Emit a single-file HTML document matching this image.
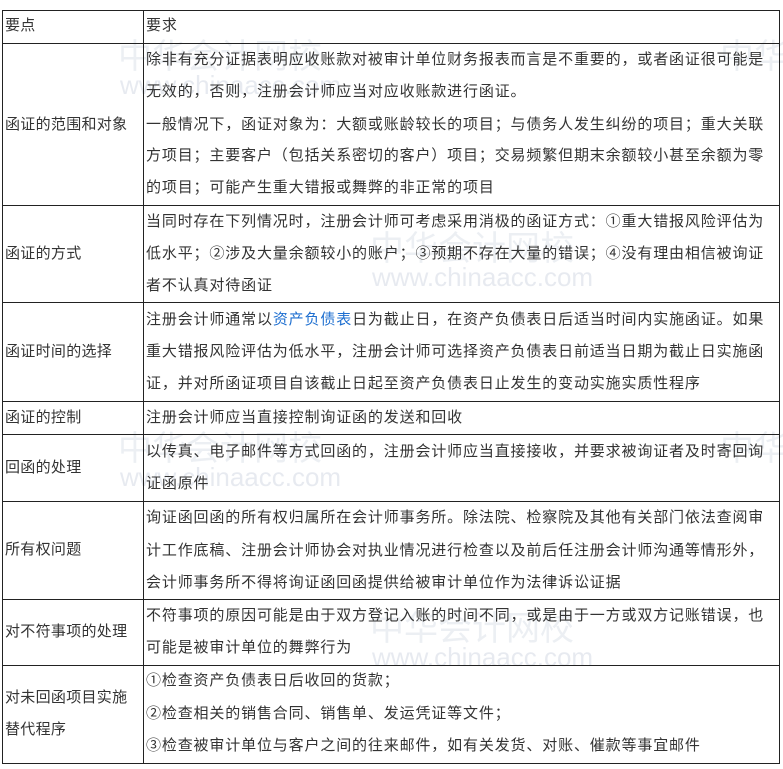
<!DOCTYPE html>
<html><head><meta charset="utf-8"><style>
body{margin:0;width:783px;height:769px;background:#fff;position:relative;overflow:hidden;font-family:"Liberation Sans","Noto Sans CJK SC",sans-serif;color:#333;}
.wm{position:absolute;color:rgba(120,140,170,0.14);font-size:34px;white-space:nowrap;line-height:1}
.wm2{position:absolute;color:rgba(120,140,170,0.18);font-size:26px;white-space:nowrap;line-height:1}
.h{position:absolute;height:1px;background:#222;left:2px;width:778px}
.v{position:absolute;width:1px;background:#222;top:10px;height:754px}
.t{position:absolute;font-size:15px;line-height:18px;white-space:nowrap;letter-spacing:0.85px}
.l{left:5px;letter-spacing:0.3px}
.r{left:146px}
a{color:#1e6fd0;text-decoration:none}
</style></head><body>
<div class="wm" style="left:118px;top:40px">中华会计网校</div>
<div class="wm2" style="left:120px;top:72px">www.chinaacc.com</div>
<div class="wm" style="left:370px;top:232px">中华会计网校</div>
<div class="wm2" style="left:372px;top:264px">www.chinaacc.com</div>
<div class="wm" style="left:118px;top:432px">中华会计网校</div>
<div class="wm2" style="left:120px;top:464px">www.chinaacc.com</div>
<div class="wm" style="left:370px;top:612px">中华会计网校</div>
<div class="wm2" style="left:372px;top:644px">www.chinaacc.com</div>
<div class="wm" style="left:720px;top:40px">中华</div>
<div class="wm" style="left:720px;top:432px">中华</div>

<div class="h" style="top:10px"></div>
<div class="h" style="top:43px"></div>
<div class="h" style="top:205px"></div>
<div class="h" style="top:302px"></div>
<div class="h" style="top:401px"></div>
<div class="h" style="top:434px"></div>
<div class="h" style="top:501px"></div>
<div class="h" style="top:599px"></div>
<div class="h" style="top:665px"></div>
<div class="h" style="top:763px"></div>
<div class="v" style="left:2px"></div>
<div class="v" style="left:143px"></div>
<div class="v" style="left:779px"></div>

<div class="t l" style="top:17px">要点</div>
<div class="t r" style="top:17px">要求</div>

<div class="t l" style="top:116px">函证的范围和对象</div>
<div class="t r" style="top:51px">除非有充分证据表明应收账款对被审计单位财务报表而言是不重要的，或者函证很可能是</div>
<div class="t r" style="top:83px">无效的，否则，注册会计师应当对应收账款进行函证。</div>
<div class="t r" style="top:116px">一般情况下，函证对象为：大额或账龄较长的项目；与债务人发生纠纷的项目；重大关联</div>
<div class="t r" style="top:147px">方项目；主要客户（包括关系密切的客户）项目；交易频繁但期末余额较小甚至余额为零</div>
<div class="t r" style="top:179px">的项目；可能产生重大错报或舞弊的非正常的项目</div>

<div class="t l" style="top:245px">函证的方式</div>
<div class="t r" style="top:213px">当同时存在下列情况时，注册会计师可考虑采用消极的函证方式：①重大错报风险评估为</div>
<div class="t r" style="top:245px">低水平；②涉及大量余额较小的账户；③预期不存在大量的错误；④没有理由相信被询证</div>
<div class="t r" style="top:277px">者不认真对待函证</div>

<div class="t l" style="top:343px">函证时间的选择</div>
<div class="t r" style="top:311px">注册会计师通常以<a>资产负债表</a>日为截止日，在资产负债表日后适当时间内实施函证。如果</div>
<div class="t r" style="top:343px">重大错报风险评估为低水平，注册会计师可选择资产负债表日前适当日期为截止日实施函</div>
<div class="t r" style="top:375px">证，并对所函证项目自该截止日起至资产负债表日止发生的变动实施实质性程序</div>

<div class="t l" style="top:409px">函证的控制</div>
<div class="t r" style="top:409px">注册会计师应当直接控制询证函的发送和回收</div>

<div class="t l" style="top:459px">回函的处理</div>
<div class="t r" style="top:443px">以传真、电子邮件等方式回函的，注册会计师应当直接接收，并要求被询证者及时寄回询</div>
<div class="t r" style="top:475px">证函原件</div>

<div class="t l" style="top:541px">所有权问题</div>
<div class="t r" style="top:509px">询证函回函的所有权归属所在会计师事务所。除法院、检察院及其他有关部门依法查阅审</div>
<div class="t r" style="top:542px">计工作底稿、注册会计师协会对执业情况进行检查以及前后任注册会计师沟通等情形外，</div>
<div class="t r" style="top:574px">会计师事务所不得将询证函回函提供给被审计单位作为法律诉讼证据</div>

<div class="t l" style="top:623px">对不符事项的处理</div>
<div class="t r" style="top:607px">不符事项的原因可能是由于双方登记入账的时间不同，或是由于一方或双方记账错误，也</div>
<div class="t r" style="top:639px">可能是被审计单位的舞弊行为</div>

<div class="t l" style="top:689px">对未回函项目实施</div>
<div class="t l" style="top:721px">替代程序</div>
<div class="t r" style="top:672px">①检查资产负债表日后收回的货款；</div>
<div class="t r" style="top:705px">②检查相关的销售合同、销售单、发运凭证等文件；</div>
<div class="t r" style="top:737px">③检查被审计单位与客户之间的往来邮件，如有关发货、对账、催款等事宜邮件</div>
</body></html>
